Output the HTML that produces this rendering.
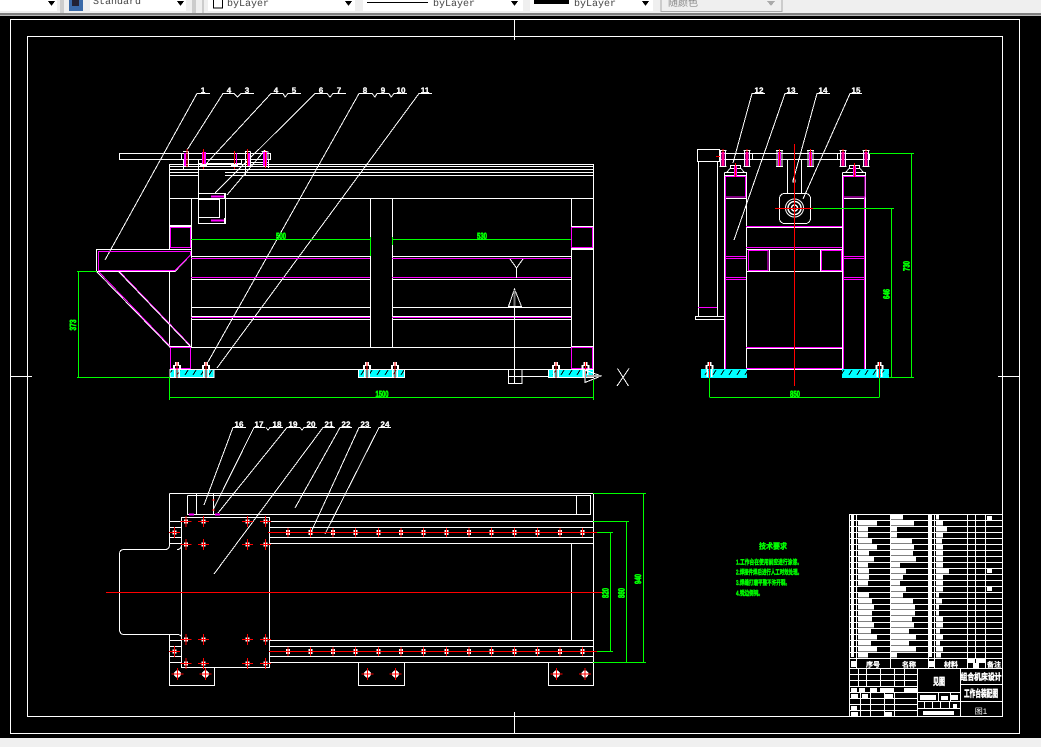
<!DOCTYPE html>
<html><head><meta charset="utf-8"><style>
html,body{margin:0;padding:0;background:#000;width:1041px;height:747px;overflow:hidden}
svg{display:block}
text{font-family:"Liberation Sans","Noto Sans CJK SC",sans-serif}
.w{fill:none;stroke:#fff;stroke-width:1}
.m{fill:none;stroke:#f0f;stroke-width:1}
.r{fill:none;stroke:#f00;stroke-width:1}
.g{fill:none;stroke:#0f0;stroke-width:1}
.n{fill:#fff;font-size:8px;font-weight:bold;text-anchor:middle;stroke:#fff;stroke-width:.3}
.d{fill:#0f0;font-size:9px;font-weight:bold;stroke:#0f0;stroke-width:.7;text-anchor:middle}
.t{fill:#0f0;font-size:7px;font-weight:bold;stroke:#0f0;stroke-width:.4}
.b{fill:#fff;font-size:9px;font-weight:bold;stroke:#fff;stroke-width:.5;text-anchor:middle}
.tb{font-family:"Liberation Mono","Noto Sans CJK SC",monospace;font-size:10px;fill:#444}
</style></head><body>
<svg width="1041" height="747" viewBox="0 0 1041 747" shape-rendering="crispEdges" text-rendering="geometricPrecision">
<defs>
<pattern id="h" patternUnits="userSpaceOnUse" width="8" height="8"><rect width="8" height="8" fill="#0ff"/><path d="M1 7L4 2" stroke="#000" stroke-width="1"/></pattern>
<g id="fb"><path d="M-2 0h4v3h-4zM-4 3h2v4h-2zM2 3h2v4h-2zM-3 7h1.500v8h-1.500zM1.500 7h1.500v8h-1.500z" fill="#fff"/><path d="M-4 3h8v1h-8z" fill="#fff"/><path class="r" d="M0 0v16"/></g>
<g id="pb"><rect x="-2" y="-2.500" width="4" height="5" fill="#fff"/><path class="r" d="M0-4.500v9M-3.500 0h7"/></g>
<g id="qb"><rect x="-2" y="-2" width="4" height="4" fill="#fff"/><path class="r" d="M0-5.500v11M-5.500 0h11"/></g>
<g id="cb"><circle r="3.500" fill="#fff"/><path class="r" d="M0-6v12M-6 0h12"/></g>
<g id="sb"><path stroke="#f0f" stroke-width="3" fill="none" d="M0-1v14"/><path class="w" d="M-3.500-2.500h7M-2.500-2.500V13M2.500-2.500V13M-3.500 13.500h7"/><path class="r" d="M0-4v17"/></g>
</defs>

<rect width="1041" height="747" fill="#000"/>
<!-- toolbar -->
<rect width="1041" height="14" fill="#efefef"/>
<rect y="13" width="1041" height="2" fill="#808080"/>
<rect y="15" width="1041" height="1" fill="#bbb"/>
<rect width="57" height="11" fill="#fff"/>
<path d="M48 1h7l-3.500 5z" fill="#000"/>
<path d="M61 0v13M63 0v13" stroke="#aaa"/>
<rect x="69" y="0" width="14" height="11" fill="#3a6aa8"/>
<rect x="72" y="0" width="7" height="6" fill="#223"/>
<rect x="90" width="96" height="11" fill="#fff"/>
<text class="tb" x="93" y="4">Standard</text>
<path d="M177 1h7l-3.500 5z" fill="#000"/>
<path d="M193 0v13M195 0v13M203 0v13" stroke="#aaa"/>
<rect x="208" width="147" height="11" fill="#fff"/>
<rect x="213.500" y="-1" width="9" height="9" fill="#fff" stroke="#000"/>
<text class="tb" x="227" y="6">byLayer</text>
<path d="M345 1h7l-3.500 5z" fill="#000"/>
<rect x="363" width="160" height="11" fill="#fff"/>
<path d="M367 2.500h61" stroke="#000"/>
<text class="tb" x="433" y="6">byLayer</text>
<path d="M511 1h7l-3.500 5z" fill="#000"/>
<rect x="530" width="123" height="11" fill="#fff"/>
<rect x="534" y="0" width="35" height="4" fill="#000"/>
<text class="tb" x="574" y="6">byLayer</text>
<path d="M642 1h7l-3.500 5z" fill="#000"/>
<rect x="661" y="-1" width="121" height="12.500" fill="#efefef" stroke="#aaa"/>
<text class="tb" x="668" y="6" style="fill:#888">随颜色</text>
<path d="M767 1h8l-4 5z" fill="#aaa"/>
<rect y="738" width="1041" height="9" fill="#f0f0f0"/>

<!-- frames -->
<path class="w" d="M10.500 19.500H1019.500V733.500H10.500ZM27.500 36.500H1002.500V716.500H27.500Z"/>
<path class="w" d="M514.500 19V40M514.500 712V733M10 376.500H32M998 376.500H1019"/>

<!-- FRONT VIEW -->
<path class="w" d="M210 93.500H197L105 260M254 93.500H241L237.500 97 234 93.500H223L187 150M301 93.500H288L285 97 283 93.500H271L205 165M346 93.500H333L330 97 327 93.500H315L215 193M265 150L227 195M432 93.500H419L217 368M407 93.500H394L391 97 389 93.500H377L375 97 372 93.500H359L208 362"/>
<text class="n" x="203" y="93">1</text><text class="n" x="229" y="93">4</text><text class="n" x="247" y="93">3</text><text class="n" x="276" y="93">4</text><text class="n" x="294" y="93">5</text><text class="n" x="321" y="93">6</text><text class="n" x="339" y="93">7</text><text class="n" x="365" y="93">8</text><text class="n" x="383" y="93">9</text><text class="n" x="401" y="93">10</text><text class="n" x="425" y="93">11</text>
<path class="w" d="M119.500 153.500H270.500V159.500H119.500ZM181.500 153.500V159.500M198.500 159.500V223.500H225.500V193.500H198.500M198.500 199.500H219.500V217.500H198.500M198.500 163.500H241.500V159.500M183.500 159.500V169M268.500 159.500V168M245.500 159.500V175M245.500 162.500H268"/>
<path class="w" d="M169.500 164.500H593.500M169.500 166.500H593.500M169.500 169.500H593.500M169.500 172.500H198M225 172.500H593.500M169.500 175.500H198M225 175.500H593.500M169.500 198.500H593.500"/>
<path class="w" d="M169.500 164V250M169.500 272V347M191.500 198V347M370.500 198V347M392.500 198V347M571.500 198V347M593.500 164V378M169.500 347.500H593.500M169.500 369.500H593.500"/>
<path stroke="#f0f" stroke-width="2" fill="none" d="M185 153V166M249 153V166"/>
<path class="w" d="M183 151.500h5.500M245 151.500h5.500M245.500 151.500V167M250.500 151.500V167M188.500 151.500V167"/>
<path class="r" d="M187 149V167M234.500 151V169M247.500 149V166"/>
<path stroke="#f0f" stroke-width="4" fill="none" d="M204 152V165M265 152V166"/>
<path class="m" d="M236.500 153V166"/>
<path class="r" d="M203.500 149V169M265.500 150V168"/>
<path d="M200 164h7v3h-7zM231 164h7v3h-7z" fill="#fff"/>
<path class="w" d="M261.500 151.500h6M268 151.500V160"/>
<path stroke="#f0f" stroke-width="2" fill="none" d="M211 196.500H226M211 220.500H226"/>
<path d="M224 194h2v5h-2zM224 218h2v5h-2z" fill="#fff"/>
<path class="w" d="M191 256.500H370M392 256.500H571M191 279.500H370M392 279.500H571M191 307.500H370M392 307.500H571M191 316.500H370M392 316.500H571M191 319.500H370M392 319.500H571M571 249.500H593"/>
<path class="m" d="M191 258.500H370M392 258.500H571M191 277.500H370M392 277.500H571M191 317.500H370M392 317.500H571"/>
<path class="g" d="M191 239.500H370M392 239.500H571M370.500 237V256M392.500 237V245M571.500 240V249"/>
<text class="d" x="281" y="239" textLength="10" lengthAdjust="spacingAndGlyphs">500</text>
<text class="d" x="482" y="239" textLength="10" lengthAdjust="spacingAndGlyphs">530</text>
<path class="w" d="M170 226.500H191M170 247.500H191M170 225.500H191M571 226.500H593M571 248.500H593M170 346.500H191M571 346.500H593"/>
<rect x="170.500" y="227.500" width="20" height="20" fill="none" stroke="#f0f"/>
<rect x="571.500" y="227.500" width="21" height="20" fill="none" stroke="#f0f"/>
<rect x="170.500" y="347.500" width="20" height="21" fill="none" stroke="#f0f"/>
<rect x="571.500" y="347.500" width="21" height="21" fill="none" stroke="#f0f"/>
<path class="w" d="M96.500 249.500H191.500V254L175 271.500H96.500Z"/>
<path class="m" d="M98.500 251.500H190.500V255L175 270.500H98.500Z"/>
<path class="m" d="M99 272L170 346M120 272L190 345"/>
<path class="w" d="M97 272L170 347M119 272L191 347"/>
<g stroke="#fff">
<rect x="170" y="369.500" width="44" height="8" fill="url(#h)"/>
<rect x="358.500" y="369.500" width="46" height="8" fill="url(#h)"/>
<rect x="548.500" y="369.500" width="45" height="8" fill="url(#h)"/>
</g>
<use href="#fb" x="177" y="362"/><use href="#fb" x="206" y="362"/><use href="#fb" x="367" y="362"/><use href="#fb" x="395" y="362"/><use href="#fb" x="556" y="362"/><use href="#fb" x="585.500" y="362"/>
<path class="w" d="M510 259L516.500 268L523 259M516.500 268V278M514.500 289L508.500 306.500H521.500ZM514.500 307V369M508.500 369.500H522V383.500H508.500ZM514.500 369V383M508.500 376.500H548"/>
<path d="M514.500 290V306" stroke="#777" stroke-width="2"/>
<path class="w" d="M585 370L601 376L585 382.500ZM617.500 368.500L628.500 386M629 368.500L617 386"/>
<path d="M587 375h14v2h-14z" fill="#aaa"/>
<path class="g" d="M78.500 271.500V377.500M77 271.500H97M77 377.500H169M169.500 377V400M169.500 397.500H593.500M593.500 380V400"/>
<text class="d" transform="translate(76,325) rotate(-90)" textLength="11" lengthAdjust="spacingAndGlyphs">373</text>
<text class="d" x="382" y="397" textLength="13" lengthAdjust="spacingAndGlyphs">1500</text>

<!-- SIDE VIEW -->
<path class="w" d="M765 93.500H752L733 163M798 93.500H785L734 240M830 93.500H817L793 181M862 93.500H850L803 199"/>
<text class="n" x="759" y="93">12</text><text class="n" x="791" y="93">13</text><text class="n" x="823" y="93">14</text><text class="n" x="856" y="93">15</text>
<path class="w" d="M720 153.500H869.500V159.500H720ZM752.500 153.500V159.500M837.500 153.500V159.500"/>
<rect x="697.500" y="149.500" width="22" height="12" fill="none" stroke="#fff"/>
<path class="w" d="M698.500 149.500H719M698.500 161V317M717.500 161V317M695.500 316.500H724.500V319.500H695.500Z"/>
<path class="m" d="M698 307.500H717"/>
<path class="w" d="M724.500 172.500H746.500V369.500M724.500 172.500V369.500M724 175.500H747M842.500 172.500H865.500V369.500M842.500 172.500V369.500M842 175.500H866M746 369.500H843M725 198.500H746M843 198.500H865"/>
<rect x="725.500" y="176.500" width="20" height="20.500" fill="none" stroke="#f0f"/>
<rect x="843.500" y="176.500" width="21.500" height="20.500" fill="none" stroke="#f0f"/>
<path class="m" d="M725.500 197V369M843.500 197V369M864.500 197V369M725 256.500H746M725 258.500H746M725 277.500H746M725 279.500H746M843 256.500H865M843 258.500H865M843 277.500H865M843 279.500H865M746 226.500H842M746 247.500H842M746 347.500H842M746 368.500H842"/>
<path class="w" d="M746 227.500H842M746 249.500H842M746 271.500H842M769.500 249V271M820.500 249V271M746 348.500H842"/>
<rect x="748.500" y="250.500" width="19.500" height="20" fill="none" stroke="#f0f"/>
<rect x="821.500" y="250.500" width="20" height="20" fill="none" stroke="#f0f"/>
<rect x="779.500" y="193.500" width="31" height="30" rx="5" fill="none" stroke="#fff"/>
<path class="w" d="M787.500 160V193M801.500 160V193"/>
<g shape-rendering="auto"><circle cx="794.500" cy="208" r="9" fill="none" stroke="#fff"/><circle cx="794.500" cy="208" r="6.500" fill="none" stroke="#fff" stroke-width="1.500"/><circle cx="794.500" cy="208" r="3" fill="none" stroke="#fff" stroke-width="1.500"/></g>
<path class="w" d="M793 180h2v2h-2z"/>
<use href="#sb" x="723" y="153"/><use href="#sb" x="747" y="153"/><use href="#sb" x="779.500" y="153"/><use href="#sb" x="810.500" y="153"/><use href="#sb" x="843" y="153"/><use href="#sb" x="866" y="153"/>
<path class="w" d="M730.500 165.500h10v3h-10zM727 172l3-3.500M744 172l-3-3.500M849.500 165.500h10v3h-10zM846 172l3-3.500M863 172l-3-3.500"/>
<path stroke="#f0f" stroke-width="3" d="M735.500 166V176M854.500 166V176"/>
<path class="r" d="M735.500 163V177M854.500 163V177"/>
<path class="r" d="M716 156.500h4" stroke-width="2"/>
<path class="r" d="M794.500 144V386M775 208.500H813"/>
<rect x="701" y="369" width="46" height="9" fill="url(#h)"/>
<rect x="842" y="369" width="47" height="9" fill="url(#h)"/>
<use href="#fb" x="709.500" y="362"/><use href="#fb" x="879.500" y="362"/>
<path class="g" d="M869 153.500H914M911.500 153V377M889 377.500H914M813 208.500H894M891.500 208V377M709.500 378V397M879.500 378V397M709.500 397.500H879.500"/>
<text class="d" transform="translate(889.500,294) rotate(-90)" textLength="10" lengthAdjust="spacingAndGlyphs">646</text>
<text class="d" transform="translate(909.500,266) rotate(-90)" textLength="10" lengthAdjust="spacingAndGlyphs">730</text>
<text class="d" x="795" y="397" textLength="10" lengthAdjust="spacingAndGlyphs">850</text>

<!-- PLAN VIEW -->
<path class="w" d="M246 427.500H233L204 505M265 427.500H254L213 510M283 427.500H270L268 430 266 427.500M300 427.500H287L218 513M317 427.500H304L302 430 300 427.500M335 427.500H323L214 574M352 427.500H340L295 508M371 427.500H359L312 530M391 427.500H379L325 534"/>
<text class="n" x="239" y="427">16</text><text class="n" x="259" y="427">17</text><text class="n" x="277" y="427">18</text><text class="n" x="293" y="427">19</text><text class="n" x="311" y="427">20</text><text class="n" x="329" y="427">21</text><text class="n" x="346" y="427">22</text><text class="n" x="365" y="427">23</text><text class="n" x="385" y="427">24</text>
<path class="w" d="M169.500 493.500H593.500V685.500H548.500V662M187.500 495.500H590.500V514.500H213M576.500 495V514M187.500 495.500V514.500H213.500V494M196.500 494V514"/>
<path class="w" d="M169.500 493.500V545Q169.500 549.500 165 549.500H124Q119.500 549.500 119.500 554V629Q119.500 634.500 124 634.500H177Q181.500 634.500 181.500 638M177 549.500Q181.500 549.500 181.500 545M169.500 634V685.500H214.500V667M181.500 517.500H269.500V667.500H181.500ZM358.500 662V685.500H404.500V662"/>
<path class="w" d="M269 521.500H593M269 527.500H593M269 537.500H593M269 543.500H593M269 640.500H593M269 646.500H593M269 656.500H593M269 662.500H593M169 521.500H181M169 527.500H181M169 537.500H181M169 543.500H181M169 640.500H181M169 646.500H181M169 656.500H181M169 662.500H181M571.500 544V640"/>
<path class="r" d="M106 592.500H602M268 532.500H597M269 651.500H597"/>
<use href="#pb" x="288" y="532.500"/><use href="#pb" x="310.500" y="532.500"/><use href="#pb" x="333" y="532.500"/><use href="#pb" x="355.500" y="532.500"/><use href="#pb" x="378.500" y="532.500"/><use href="#pb" x="401" y="532.500"/><use href="#pb" x="423.500" y="532.500"/><use href="#pb" x="446.500" y="532.500"/><use href="#pb" x="469" y="532.500"/><use href="#pb" x="491.500" y="532.500"/><use href="#pb" x="514.500" y="532.500"/><use href="#pb" x="537.500" y="532.500"/><use href="#pb" x="560" y="532.500"/><use href="#pb" x="582.500" y="532.500"/>
<use href="#pb" x="288" y="651.500"/><use href="#pb" x="310.500" y="651.500"/><use href="#pb" x="333" y="651.500"/><use href="#pb" x="355.500" y="651.500"/><use href="#pb" x="378.500" y="651.500"/><use href="#pb" x="401" y="651.500"/><use href="#pb" x="423.500" y="651.500"/><use href="#pb" x="446.500" y="651.500"/><use href="#pb" x="469" y="651.500"/><use href="#pb" x="491.500" y="651.500"/><use href="#pb" x="514.500" y="651.500"/><use href="#pb" x="537.500" y="651.500"/><use href="#pb" x="560" y="651.500"/><use href="#pb" x="582.500" y="651.500"/>
<use href="#qb" x="186" y="521.500"/><use href="#qb" x="203.500" y="521.500"/><use href="#qb" x="247.500" y="521.500"/><use href="#qb" x="265.500" y="521.500"/>
<use href="#qb" x="186" y="544.500"/><use href="#qb" x="203.500" y="544.500"/><use href="#qb" x="247.500" y="544.500"/><use href="#qb" x="265.500" y="544.500"/>
<use href="#qb" x="186" y="639.500"/><use href="#qb" x="203.500" y="639.500"/><use href="#qb" x="247.500" y="639.500"/><use href="#qb" x="265.500" y="639.500"/>
<use href="#qb" x="186" y="663.500"/><use href="#qb" x="203.500" y="663.500"/><use href="#qb" x="247.500" y="663.500"/><use href="#qb" x="265.500" y="663.500"/>
<use href="#qb" x="174.500" y="532.500"/><use href="#qb" x="174.500" y="651.500"/>
<use href="#cb" x="177.500" y="674"/><use href="#cb" x="205.500" y="674"/><use href="#cb" x="367.500" y="674"/><use href="#cb" x="395.500" y="674"/><use href="#cb" x="556.500" y="674"/><use href="#cb" x="585" y="674"/>
<path d="M189 513.500h5v2h-5zM215 513.500h5v2h-5z" fill="#f0f"/>
<path class="r" d="M212 500h3M212 510h3"/>
<path class="g" d="M593 493.500H646M643.500 493V662M593 662.500H646M593 521.500H629M626.500 521V662M597 532.500H613M610.500 532V651M597 651.500H613"/>
<text class="d" transform="translate(641,579) rotate(-90)" textLength="10" lengthAdjust="spacingAndGlyphs">940</text>
<text class="d" transform="translate(624.500,593) rotate(-90)" textLength="10" lengthAdjust="spacingAndGlyphs">860</text>
<text class="d" transform="translate(608.500,593) rotate(-90)" textLength="10" lengthAdjust="spacingAndGlyphs">820</text>

<!-- tech notes -->
<text class="t" x="759" y="549" style="font-size:8px" textLength="28" lengthAdjust="spacingAndGlyphs">技术要求</text>
<text class="t" x="736" y="564.500" textLength="66" lengthAdjust="spacingAndGlyphs">1.工作台在使用前应进行涂漆。</text>
<text class="t" x="736" y="574.500" textLength="66" lengthAdjust="spacingAndGlyphs">2.焊接件焊后进行人工时效处理。</text>
<text class="t" x="736" y="585" textLength="54" lengthAdjust="spacingAndGlyphs">3.焊缝打磨平整不许开裂。</text>
<text class="t" x="736" y="595.500" textLength="27" lengthAdjust="spacingAndGlyphs">4.锐边倒钝。</text>

<!-- TITLE BLOCK -->
<line x1="925.500" y1="514" x2="925.500" y2="659" stroke="#fff" stroke-width="153" stroke-dasharray="1 5"/>
<path class="w" d="M849.500 514V716M1002.500 514V716M856.500 514V668M890.500 514V668M928.500 514V668M934.500 514V668M967.500 514V668M975.500 514V658M985.500 514V668M849 668.500H1002.500"/>
<path stroke="#fff" stroke-width="3" stroke-dasharray="5 1" d="M852.500 515V657M930.500 515V657"/>
<path stroke="#fff" stroke-width="5" d="M858 523H877M858 529H868M858 535H868M858 541H872M858 547H877M858 553H869M858 559H874M858 565H868M858 571H869M858 577H869M858 583H868M858 595H869M858 601H872M858 607H874M858 613H872M858 619H872M858 625H874M858 631H871M858 637H877M858 643H871M858 649H877M858 655H868"/>
<path stroke="#fff" stroke-width="5" d="M891 517H903M891 523H914M891 529H897M891 535H897M891 541H912M891 547H914M891 553H913M891 559H916M891 565H900M891 571H906M891 577H903M891 583H900M891 589H906M891 595H903M891 601H913M891 607H915M891 613H915M891 619H912M891 625H914M891 631H909M891 637H916M891 643H909M891 649H916M891 655H897"/>
<path stroke="#fff" stroke-width="5" d="M936 517H939M936 523H943M936 529H947M936 535H943M936 541H942M936 547H943M936 553H943M936 559H943M936 565H943M936 571H949M936 577H943M936 583H943M936 589H943M936 595H939M936 601H942M936 607H939M936 613H939M936 619H943M936 625H943M936 631H940M936 637H943M936 643H940M936 649H943M936 655H941"/>
<path stroke="#fff" stroke-width="4" d="M987 518H992M987 571H992M987 589H992"/>
<path d="M851 661h5v6h-5zM929 661h5v6h-5zM967 658h8v5h-8zM976 658h9v5h-9zM973 663h6v5h-6z" fill="#fff"/>
<text class="n" x="873" y="667" style="font-size:7px">序号</text><text class="n" x="909" y="667" style="font-size:7px">名称</text><text class="n" x="951" y="667" style="font-size:7px">材料</text><text class="n" x="994" y="667" style="font-size:7px">备注</text>
<path class="w" d="M849 674.500H917M849 680.500H917M849 686.500H917M849 692.500H917M849 698.500H917M849 704.500H917M849 710.500H917M917.500 668V716M960.500 668V716M917 692.500H960M917 701.500H960M917 708.500H960M960 684.500H1002M960 701.500H1002M858.500 668V686M866.500 668V686M880.500 668V686M894.500 668V686M904.500 668V686M860.500 692V716M870.500 692V716M884.500 692V716M894.500 692V716M938.500 692V701M950.500 692V701M924.500 701V708M932.500 701V708M940.500 701V708M949.500 701V708"/>
<path d="M851 688h6v4h-6zM859 688h6v4h-6zM870 688h7v4h-7zM880 688h14v4h-14zM904 688h13v4h-13zM851 694h7v4h-7zM862 694h6v4h-6zM884 694h9v4h-9zM851 706h6v4h-6zM851 712h7v4h-7zM885 712h7v4h-7zM920 695h16v5h-16zM941 696h7v4h-7zM951 695h7v5h-7zM953 704h4v4h-4zM923 711h31v4h-31z" fill="#fff"/>
<text class="b" x="939" y="685" textLength="12" lengthAdjust="spacingAndGlyphs" style="font-size:10px">见图</text>
<text class="b" x="981" y="680" textLength="41" lengthAdjust="spacingAndGlyphs" style="font-size:9px">组合机床设计</text>
<text class="b" x="981" y="697" textLength="34" lengthAdjust="spacingAndGlyphs" style="font-size:10px">工作台装配图</text>
<text x="981" y="714" fill="#fff" style="font-size:8px;text-anchor:middle">图1</text>
</svg>
</body></html>
